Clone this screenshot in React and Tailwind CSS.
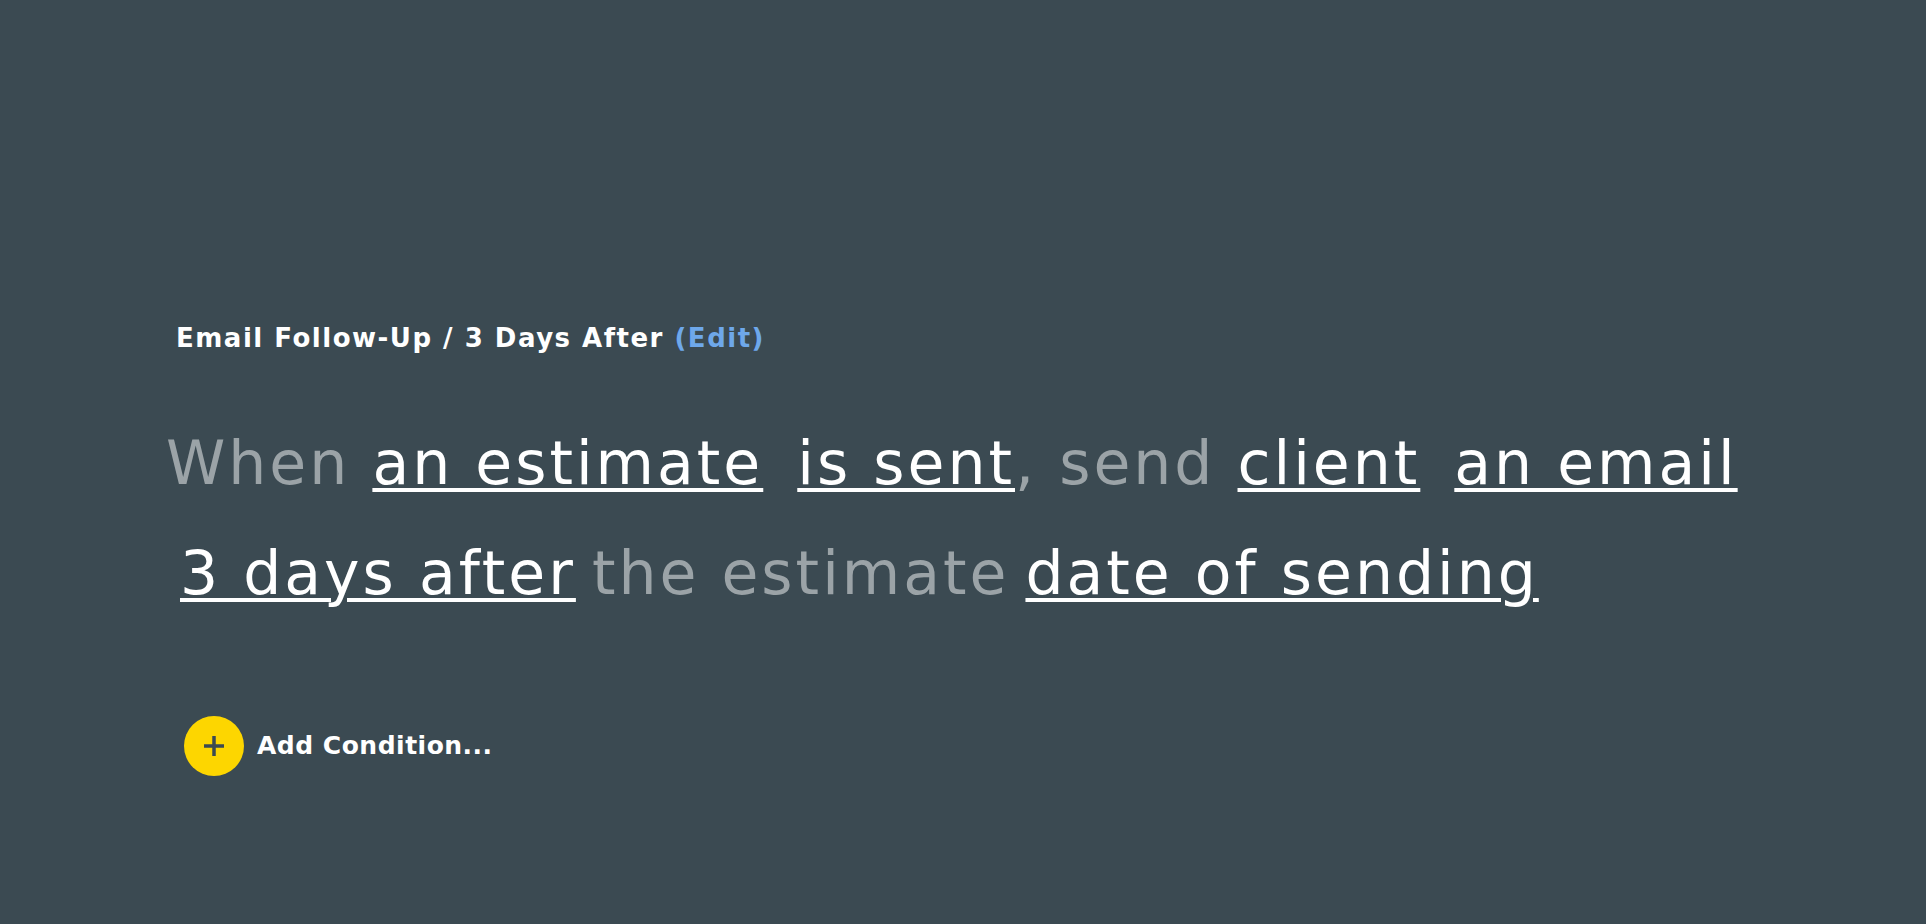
export default function App() {
  const ul = "text-white underline decoration-[4px] underline-offset-[4px]";
  const dim = "text-[#9ba3a7]";

  return (
    <div className="min-h-screen w-full bg-[#3b4a52] pl-[176px] pt-[320px] font-['DejaVu_Sans',sans-serif]">
      <h2 className="text-[26px] font-bold leading-[36px] tracking-[1.5px] text-white">
        Email Follow-Up / 3 Days After <span className="text-[#6ea8ea]">(Edit)</span>
      </h2>

      <div className="mt-[52px] -ml-[10px] text-[60px] leading-[110px] tracking-[3px] whitespace-nowrap">
        <div>
          <span className={dim}>When</span>{" "}
          <span className={ul}>an estimate</span>
          <span className="ml-[34px]" />
          <span className={ul}>is sent</span>
          <span className={dim}>, send</span>{" "}
          <span className={ul}>client</span>
          <span className="ml-[34px]" />
          <span className={ul}>an email</span>
        </div>
        <div className="pl-[14px]">
          <span className={ul}>3 days after</span>
          <span className="ml-[16px]" />
          <span className={dim}>the estimate</span>
          <span className="ml-[16px]" />
          <span className={ul}>date of sending</span>
        </div>
      </div>

      <div className="mt-[88px] ml-[8px] flex items-center gap-[13px]">
        <button className="flex h-[60px] w-[60px] items-center justify-center rounded-full bg-[#fdd600]">
          <svg width="20" height="20" viewBox="0 0 20 20">
            <path d="M10 1v18M1 10h18" stroke="#3b4a52" strokeWidth="3.5" strokeLinecap="square" />
          </svg>
        </button>
        <span className="text-[25px] font-bold tracking-[0.5px] text-white">Add Condition...</span>
      </div>
    </div>
  );
}
